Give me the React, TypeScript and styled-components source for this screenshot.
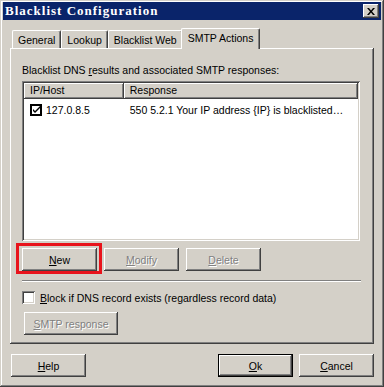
import styled, { createGlobalStyle } from "styled-components";

const GlobalStyle = createGlobalStyle`
  html, body {
    margin: 0;
    padding: 0;
    background: #d4d0c8;
  }
  * {
    box-sizing: border-box;
  }
`;

const FACE = "#d4d0c8";
const UI_FONT = `"Liberation Sans", Arial, sans-serif`;

export default function App() {
  return (
    <>
      <GlobalStyle />
      <Window>
        <TitleBar>
          <Title>Blacklist Configuration</Title>
          <CloseButton>
            <svg width="8" height="7" viewBox="0 0 8 7">
              <path d="M0 0h2l2 2.5L6 0h2L5 3.5 8 7H6L4 4.5 2 7H0l3-3.5z" fill="#000" />
            </svg>
          </CloseButton>
        </TitleBar>

        <Body>
          <TabStrip>
            <Tab>General</Tab>
            <Tab>Lookup</Tab>
            <Tab>Blacklist Web</Tab>
            <Tab $active>SMTP Actions</Tab>
          </TabStrip>

          <Panel>
            <Label>
              Blacklist DNS <u>r</u>esults and associated SMTP responses:
            </Label>

            <ListView>
              <HeaderRow>
                <HeaderCell $width={100}>IP/Host</HeaderCell>
                <HeaderCell $width={235}>Response</HeaderCell>
                <HeaderFill />
              </HeaderRow>
              <Row>
                <Cell $width={100}>
                  <RowCheck>
                    <svg width="7" height="7" viewBox="0 0 7 7">
                      <path d="M0 3l2 2 5-5v2L2 7 0 5z" fill="#000" />
                    </svg>
                  </RowCheck>
                  127.0.8.5
                </Cell>
                <Cell $width={235}>550 5.2.1 Your IP address {"{IP}"} is blacklisted…</Cell>
              </Row>
            </ListView>

            <ButtonRow>
              <Highlight>
                <Button>
                  <u>N</u>ew
                </Button>
                <RedFrame />
              </Highlight>
              <Button disabled>
                <u>M</u>odify
              </Button>
              <Button disabled>
                <u>D</u>elete
              </Button>
            </ButtonRow>

            <Separator />

            <CheckRow>
              <CheckBox />
              <span>
                <u>B</u>lock if DNS record exists (regardless record data)
              </span>
            </CheckRow>

            <SmtpButton disabled>
              <u>S</u>MTP response
            </SmtpButton>
          </Panel>

          <Footer>
            <Button>
              <u>H</u>elp
            </Button>
            <FooterRight>
              <Button $default>
                <u>O</u>k
              </Button>
              <Button>
                <u>C</u>ancel
              </Button>
            </FooterRight>
          </Footer>
        </Body>
      </Window>
    </>
  );
}

const Window = styled.div`
  width: 384px;
  height: 387px;
  background: ${FACE};
  padding: 2px 3px 3px 3px;
  display: flex;
  flex-direction: column;
  box-shadow: inset -1px -1px #404040, inset 1px 1px ${FACE}, inset -2px -2px #808080,
    inset 2px 2px #ffffff;
  font-family: ${UI_FONT};
  font-size: 10.5px;
  color: #000;
`;

const TitleBar = styled.div`
  height: 18px;
  background: #0a246a;
  display: flex;
  align-items: center;
  justify-content: space-between;
  padding: 0 2px 0 2px;
`;

const Title = styled.div`
  font-family: "Liberation Serif", "Times New Roman", serif;
  font-weight: bold;
  font-size: 13px;
  letter-spacing: 1px;
  color: #ffffff;
`;

const CloseButton = styled.div`
  width: 16px;
  height: 14px;
  background: ${FACE};
  display: flex;
  align-items: center;
  justify-content: center;
  box-shadow: inset -1px -1px #404040, inset 1px 1px #ffffff, inset -2px -2px #808080;
`;

const Body = styled.div`
  flex: 1;
  display: flex;
  flex-direction: column;
  padding: 8px 7px 0 7px;
`;

const TabStrip = styled.div`
  display: flex;
  align-items: flex-end;
  height: 20px;
  padding-left: 2px;
  position: relative;
  z-index: 1;
`;

const Tab = styled.div<{ $active?: boolean }>`
  height: ${({ $active }) => ($active ? "21px" : "18px")};
  margin: ${({ $active }) => ($active ? "0 -2px -1px -2px" : "0")};
  padding: ${({ $active }) => ($active ? "2px 6px 0 6px" : "2px 5px 0 5px")};
  background: ${FACE};
  border-top: 1px solid #ffffff;
  border-left: 1px solid #ffffff;
  border-right: 1px solid #404040;
  border-radius: 2px 2px 0 0;
  box-shadow: inset -1px 0 #808080;
  white-space: nowrap;
  line-height: 14px;
  position: relative;
  z-index: ${({ $active }) => ($active ? 2 : 1)};
`;

const Panel = styled.div`
  width: 364px;
  height: 296px;
  background: ${FACE};
  padding: 16px 12px 0 12px;
  display: flex;
  flex-direction: column;
  box-shadow: inset -1px -1px #404040, inset 1px 1px #ffffff, inset -2px -2px #808080;
`;

const Label = styled.div`
  height: 17px;
  line-height: 13px;
  white-space: nowrap;
`;

const ListView = styled.div`
  width: 338px;
  height: 160px;
  background: #ffffff;
  padding: 2px;
  box-shadow: inset 1px 1px #808080, inset -1px -1px #ffffff, inset 2px 2px #404040,
    inset -2px -2px ${FACE};
  overflow: hidden;
`;

const HeaderRow = styled.div`
  display: flex;
  height: 16px;
`;

const HeaderCell = styled.div<{ $width: number }>`
  width: ${({ $width }) => $width}px;
  background: ${FACE};
  padding: 1px 0 0 6px;
  line-height: 13px;
  box-shadow: inset -1px -1px #404040, inset 1px 1px #ffffff, inset -2px -2px #808080;
`;

const HeaderFill = styled.div`
  flex: 1;
  background: ${FACE};
  box-shadow: inset 1px 1px #ffffff, inset 0 -1px #808080;
`;

const Row = styled.div`
  display: flex;
  height: 17px;
  margin-top: 2px;
  align-items: center;
`;

const Cell = styled.div<{ $width: number }>`
  width: ${({ $width }) => $width}px;
  padding-left: 6px;
  display: flex;
  align-items: center;
  white-space: nowrap;
`;

const RowCheck = styled.span`
  width: 12px;
  height: 12px;
  border: 2px solid #000;
  display: flex;
  align-items: center;
  justify-content: center;
  margin-right: 4px;
`;

const ButtonRow = styled.div`
  display: flex;
  gap: 7px;
  margin-top: 7px;
`;

const Button = styled.button<{ $default?: boolean }>`
  width: 75px;
  height: 23px;
  background: ${FACE};
  border: ${({ $default }) => ($default ? "1px solid #000" : "none")};
  padding: 0;
  font-family: ${UI_FONT};
  font-size: 10.5px;
  color: #000;
  box-shadow: inset -1px -1px #404040, inset 1px 1px #ffffff, inset -2px -2px #808080;

  &:disabled {
    color: #808080;
    text-shadow: 1px 1px #ffffff;
  }
`;

const SmtpButton = styled(Button)`
  width: 94px;
  margin-left: 2px;
  margin-top: 8px;
`;

const Highlight = styled.div`
  position: relative;
  display: flex;
`;

const RedFrame = styled.span`
  position: absolute;
  left: -6px;
  top: -5px;
  width: 86px;
  height: 31px;
  border: 3px solid #e8131b;
  pointer-events: none;
`;

const Separator = styled.div`
  width: 339px;
  height: 2px;
  margin-top: 9px;
  border-top: 1px solid #808080;
  border-bottom: 1px solid #ffffff;
`;

const CheckRow = styled.div`
  display: flex;
  align-items: center;
  gap: 5px;
  margin-top: 9px;
  height: 13px;
  white-space: nowrap;
`;

const CheckBox = styled.span`
  width: 13px;
  height: 13px;
  background: #ffffff;
  box-shadow: inset 1px 1px #808080, inset -1px -1px #ffffff, inset 2px 2px #404040,
    inset -2px -2px ${FACE};
`;

const Footer = styled.div`
  display: flex;
  justify-content: space-between;
  margin-top: 10px;
  padding-left: 1px;
`;

const FooterRight = styled.div`
  display: flex;
  gap: 6px;
`;
